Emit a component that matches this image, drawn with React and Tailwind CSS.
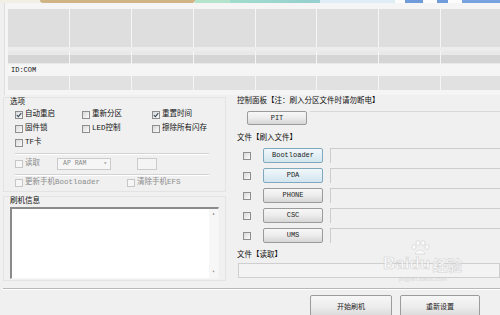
import React from "react";

const F = "font-['Liberation_Mono','Noto_Sans_CJK_SC',monospace]";

function Box({ checked, disabled }) {
  return (
    <span
      className={`flex h-[8px] w-[8px] shrink-0 items-center justify-center border ${
        disabled
          ? "border-[#c6c6c6] bg-[#f6f6f6]"
          : "border-[#8e8e8e] bg-linear-to-br from-[#d9d9d9] to-[#fbfbfb]"
      }`}
    >
      {checked && (
        <svg width="6" height="6" viewBox="0 0 6 6">
          <path d="M0.8 3.1 L2.4 4.7 L5.3 1.1" fill="none" stroke="#3a4a5a" strokeWidth="1.1" />
        </svg>
      )}
    </span>
  );
}

function Opt({ label, checked, disabled, w }) {
  return (
    <div className={`flex items-center gap-[2px] ${w}`}>
      <Box checked={checked} disabled={disabled} />
      <span className={disabled ? "text-[#8c8c8c]" : "text-[#111]"}>{label}</span>
    </div>
  );
}

function Btn({ children, blue, className }) {
  return (
    <div
      className={`flex items-center justify-center rounded-[2px] border text-[7px] text-[#1a1a1a] ${
        blue
          ? "border-[#80a9bf] bg-linear-to-b from-[#f1f8fb] to-[#d3e5ee]"
          : "border-[#9b9b9b] bg-linear-to-b from-[#f7f7f7] via-[#ececec] to-[#d6d6d6]"
      } ${className}`}
    >
      {children}
    </div>
  );
}

function Cells({ h, children, cls }) {
  return (
    <div className={`grid w-[494px] grid-cols-8 gap-[1px] ${h}`}>
      {[0, 1, 2, 3, 4, 5, 6, 7].map((i) => (
        <div key={i} className={`${cls} flex flex-col`}>
          {children}
        </div>
      ))}
    </div>
  );
}

function Sep({ w }) {
  return <div className={`h-[2px] border-t border-b border-t-[#d2d2d2] border-b-white ${w}`} />;
}

export default function App() {
  const files = [
    ["Bootloader", true],
    ["PDA", true],
    ["PHONE", false],
    ["CSC", false],
    ["UMS", false],
  ];
  return (
    <div className={`relative flex h-[315px] w-[500px] flex-col overflow-hidden bg-[#f0f0f0] ${F} text-[7.5px] leading-none`}>
      {/* top decorative strip */}
      <div className="flex h-[3px] shrink-0 opacity-80">
        <div className="w-[40px] bg-[#f3efe2]" />
        <div className="w-[155px] rounded-b-[3px] bg-[#c9a66c]" />
        <div className="w-[35px] bg-[#a7e2c4]" />
        <div className="w-[90px] bg-linear-to-r from-[#8fd8c4] to-[#80c8c8]" />
        <div className="w-[75px] bg-[#dbeef8]" />
        <div className="w-[10px] bg-white" />
        <div className="w-[18px] bg-[#4f86d6]" />
        <div className="w-[14px] bg-white" />
        <div className="w-[11px] bg-[#4f86d6]" />
        <div className="w-[14px] bg-white" />
        <div className="flex-1 bg-[#5b90da]" />
      </div>

      {/* device slots */}
      <div className="ml-[4px] flex h-[92px] shrink-0 flex-col border-l border-[#dedede] bg-[#f5f5f5] pl-[3px] pt-[6px]">
        <Cells h="h-[38px]" cls="bg-[#dedede]" />
        <div className="h-[4px] bg-[#ededed]" />
        <Cells h="h-[13px]" cls="bg-[#e9e9e9]">
          <div className="mt-[4px] h-[8px] bg-[#d5d5d5]" />
        </Cells>
        <div className="flex h-[12px] items-end pb-[2px] pl-[3px] text-[7px] text-[#111]">ID:COM</div>
        <Cells h="h-[14px]" cls="bg-[#e1e1e1]" />
      </div>

      {/* main */}
      <div className="flex h-[193px] shrink-0">
        {/* left */}
        <div className="ml-[3px] flex w-[223px] flex-col">
          <div className="mt-[2px] flex flex-col border border-[#e3e3e3] pb-[1px]">
            <div className="flex h-[10px] items-center pl-[6px] text-[#111]">选项</div>
            <div className="flex flex-col pl-[11px]">
              <div className="flex h-[14px] items-center">
                <Opt label="自动重启" checked w="w-[67px]" />
                <Opt label="重新分区" w="w-[70px]" />
                <Opt label="重置时间" checked />
              </div>
              <div className="flex h-[14px] items-center">
                <Opt label="固件锁" w="w-[67px]" />
                <Opt label=" LED控制" w="w-[70px]" />
                <Opt label="擦除所有闪存" />
              </div>
              <div className="flex h-[14px] items-center">
                <Opt label="TF卡" />
              </div>
              <div className="mt-[3px]">
                <Sep w="w-[194px]" />
              </div>
              <div className="mt-[2px] flex h-[14px] items-center">
                <Opt label="读取" disabled w="w-[42px]" />
                <div className="relative flex h-[12px] w-[54px] items-center border border-[#cbcbcb] bg-[#f6f6f6] pl-[5px] text-[6.5px] text-[#8a8a8a]">
                  AP RAM
                  <span className="absolute right-[3px] top-[2px] text-[6px] text-[#a0a0a0]">▾</span>
                </div>
                <div className="ml-[26px] h-[12px] w-[20px] border border-[#cbcbcb] bg-[#f4f4f4]" />
              </div>
              <div className="mt-[3px]">
                <Sep w="w-[194px]" />
              </div>
              <div className="flex h-[14px] items-center">
                <Opt label="更新手机Bootloader" disabled w="w-[112px]" />
                <Opt label="清除手机EFS" disabled />
              </div>
            </div>
          </div>

          <div className="mt-[4px] flex flex-col border border-[#e3e3e3] pb-[1px]">
            <div className="flex h-[10px] items-center pl-[6px] text-[#111]">刷机信息</div>
            <div className="ml-[6px] flex h-[72px] w-[209px] border-l-2 border-t-2 border-b border-r border-l-[#8a8a8a] border-t-[#8a8a8a] border-b-[#f4f4f4] border-r-[#f4f4f4] bg-white">
              <div className="flex-1" />
              <div className="flex w-[9px] flex-col items-center justify-between bg-[#f7f7f7] py-[3px] text-[5px] text-[#888]">
                <span>▴</span>
                <span>▾</span>
              </div>
            </div>
          </div>
        </div>

        {/* right */}
        <div className="ml-[7px] flex flex-1 flex-col">
          <div className="flex h-[14px] items-center pl-[4px] text-[#111]">控制面板【注：刷入分区文件时请勿断电】</div>
          <div className="mt-[2px] flex h-[14px] items-start pl-[14px]">
            <Btn className="h-[14px] w-[60px]">PIT</Btn>
            <div className="ml-[3px] flex-1 border-t border-[#d8d8d8]" />
          </div>
          <div className="mt-[7px] flex h-[14px] items-center pl-[4px] text-[#111]">文件【刷入文件】</div>
          <div className="mt-[2px] flex flex-col gap-[5px]">
            {files.map(([name, blue]) => (
              <div key={name} className="flex h-[15px] items-center pl-[10px]">
                <Box />
                <Btn blue={blue} className="ml-[12px] h-[15px] w-[60px]">
                  {name}
                </Btn>
                <div className="ml-[7px] h-[15px] flex-1 border-l border-t border-[#cdcdcd]" />
              </div>
            ))}
          </div>
          <div className="mt-[6px] flex h-[14px] items-center pl-[4px] text-[#111]">文件【读取】</div>
          <div className="ml-[5px] h-[15px] border border-[#cfcfcf] bg-[#f3f3f3]" />
        </div>
      </div>

      {/* bottom */}
      <div className="ml-[3px] h-[2px] shrink-0 border-t border-b border-t-[#b8b8b8] border-b-white" />
      <div className="mt-[5px] flex gap-[8px] pl-[310px]">
        <Btn className="h-[24px] w-[82px] text-[7.5px]">开始刷机</Btn>
        <Btn className="h-[24px] w-[80px] text-[7.5px]">重新设置</Btn>
      </div>

      {/* watermark */}
      <div className="pointer-events-none absolute left-[383px] top-[255px] flex flex-col items-center opacity-70">
        <div className="relative flex items-end">
          <span className="font-['Liberation_Sans',sans-serif] text-[17px] font-bold leading-none text-white [-webkit-text-stroke:0.6px_#c4c4c4]">
            Bai
          </span>
          <span className="relative font-['Liberation_Sans',sans-serif] text-[17px] font-bold leading-none text-white [-webkit-text-stroke:0.6px_#c4c4c4]">
            du
            <svg className="absolute -top-[15px] left-[1px]" width="20" height="16" viewBox="0 0 20 16">
              <g fill="white" stroke="#c4c4c4" strokeWidth="0.6">
                <ellipse cx="4" cy="7" rx="2" ry="2.5" />
                <ellipse cx="8" cy="3" rx="2" ry="2.5" />
                <ellipse cx="13" cy="3" rx="2" ry="2.5" />
                <ellipse cx="17" cy="7" rx="2" ry="2.5" />
                <path d="M5 14 C6 9 14 9 15 14 Z" />
              </g>
            </svg>
          </span>
          <span className="ml-[2px] font-['Noto_Sans_CJK_SC',sans-serif] text-[15px] font-bold leading-none text-white [-webkit-text-stroke:0.5px_#c4c4c4]">
            经验
          </span>
        </div>
        <div className="mt-[4px] font-['Liberation_Sans',sans-serif] text-[6px] text-[#cfcfcf]">jingyan.baidu.com</div>
      </div>
    </div>
  );
}
